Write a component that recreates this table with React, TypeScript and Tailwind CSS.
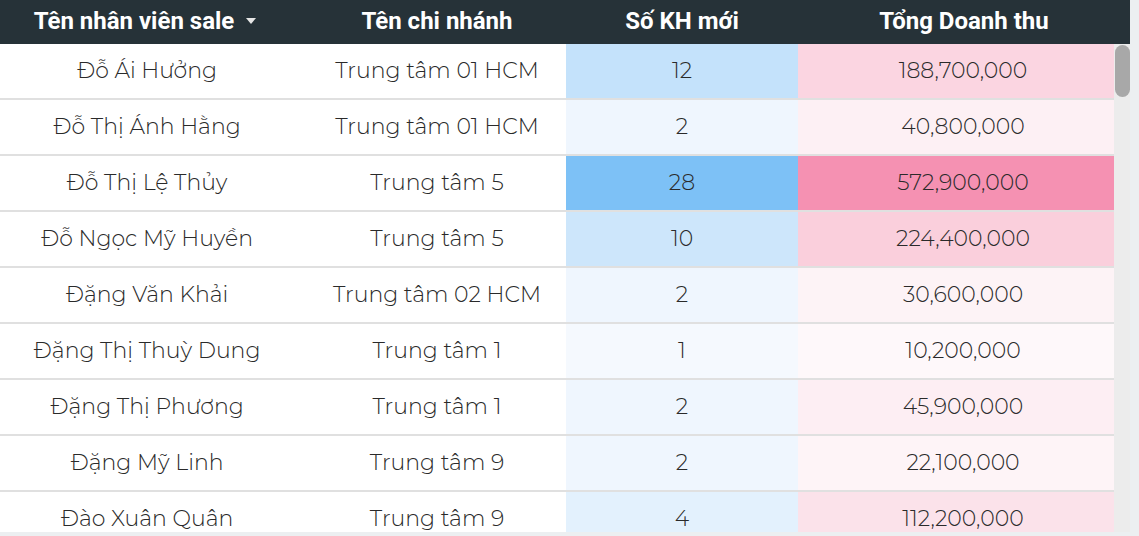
const rows = [
  { name: "Đỗ Ái Hưởng", branch: "Trung tâm 01 HCM", kh: 12, rev: "188,700,000", khBg: "bg-[#c4e2fb]", revBg: "bg-[#fbd5e1]" },
  { name: "Đỗ Thị Ánh Hằng", branch: "Trung tâm 01 HCM", kh: 2, rev: "40,800,000", khBg: "bg-[#eff6fe]", revBg: "bg-[#fdf0f4]" },
  { name: "Đỗ Thị Lệ Thủy", branch: "Trung tâm 5", kh: 28, rev: "572,900,000", khBg: "bg-[#7dc1f6]", revBg: "bg-[#f591b2]" },
  { name: "Đỗ Ngọc Mỹ Huyền", branch: "Trung tâm 5", kh: 10, rev: "224,400,000", khBg: "bg-[#cde6fb]", revBg: "bg-[#facfdc]" },
  { name: "Đặng Văn Khải", branch: "Trung tâm 02 HCM", kh: 2, rev: "30,600,000", khBg: "bg-[#eff6fe]", revBg: "bg-[#fdf3f6]" },
  { name: "Đặng Thị Thuỳ Dung", branch: "Trung tâm 1", kh: 1, rev: "10,200,000", khBg: "bg-[#f5f9fe]", revBg: "bg-[#fef8fa]" },
  { name: "Đặng Thị Phương", branch: "Trung tâm 1", kh: 2, rev: "45,900,000", khBg: "bg-[#eff6fe]", revBg: "bg-[#fdeef3]" },
  { name: "Đặng Mỹ Linh", branch: "Trung tâm 9", kh: 2, rev: "22,100,000", khBg: "bg-[#eff6fe]", revBg: "bg-[#fef4f7]" },
  { name: "Đào Xuân Quân", branch: "Trung tâm 9", kh: 4, rev: "112,200,000", khBg: "bg-[#e3f1fd]", revBg: "bg-[#fbe2ea]" },
];

export default function App() {
  return (
    <div className="w-[1139px] h-[536px] bg-[#eceff1] overflow-hidden">
      <div className="w-[1130px] h-[532px] flex flex-col bg-white">
        {/* header */}
        <div
          className="h-[44px] shrink-0 bg-[#263238] text-white grid grid-cols-[308px_258px_232px_1fr] items-center text-[24px] font-bold pb-[3px]"
          style={{ fontFamily: "Roboto, sans-serif" }}
        >
          <div className="flex items-center justify-center gap-[12px] pr-[18px]">
            <span>Tên nhân viên sale</span>
            <svg width="10" height="6" viewBox="0 0 10 6">
              <path d="M0 0 L10 0 L5 6 Z" fill="#e6e6e6" />
            </svg>
          </div>
          <div className="text-center">Tên chi nhánh</div>
          <div className="text-center">Số KH mới</div>
          <div className="text-center">Tổng Doanh thu</div>
        </div>

        {/* body */}
        <div className="flex flex-1 min-h-0">
          <div
            className="flex-1 overflow-hidden text-[22px] font-light text-[#2a2a2a]"
            style={{ fontFamily: "Montserrat, Inter, sans-serif" }}
          >
            {rows.map((r) => (
              <div
                key={r.name}
                className="grid grid-cols-[308px_258px_232px_1fr] h-[56px] border-b-2 border-[#e0e0e0]"
              >
                <div className="flex items-center justify-center pr-[14px] pb-[1px]">{r.name}</div>
                <div className="flex items-center justify-center pb-[1px]">{r.branch}</div>
                <div className={`flex items-center justify-center pb-[1px] ${r.khBg}`}>{r.kh}</div>
                <div className={`flex items-center justify-center pl-[14px] pb-[1px] ${r.revBg}`}>{r.rev}</div>
              </div>
            ))}
          </div>
          {/* scrollbar */}
          <div className="w-[16px] shrink-0 bg-[#ececec] pt-[1px]">
            <div className="mx-auto w-[15px] h-[52px] rounded-full bg-[#a8a8a8]" />
          </div>
        </div>
      </div>
    </div>
  );
}
